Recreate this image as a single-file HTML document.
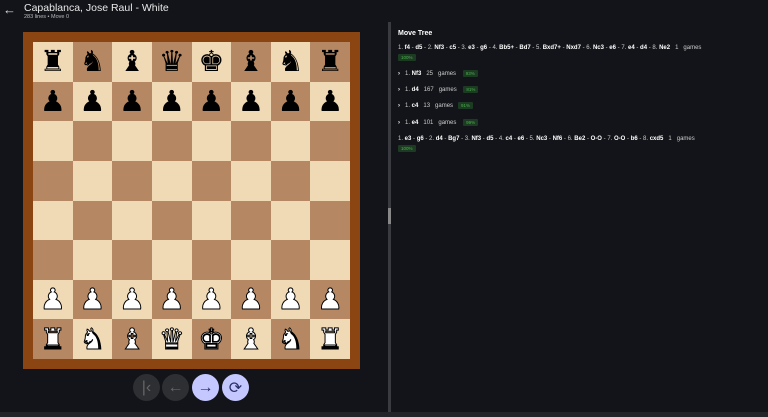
<!DOCTYPE html>
<html><head><meta charset="utf-8"><style>
*{margin:0;padding:0;box-sizing:border-box}
body{width:768px;height:417px;background:#131419;font-family:"Liberation Sans",sans-serif;color:#e6e6e6;position:relative;overflow:hidden}
.back{position:absolute;left:3px;top:2px;font-size:13px;color:#ddd}
.title{position:absolute;left:24px;top:2px;font-size:10.5px;color:#e8e8e8}
.sub{position:absolute;left:24px;top:14px;font-size:5.5px;color:#bbb}
.board{position:absolute;left:23px;top:32px;width:337px;height:337px;background:#8b4513;padding:10px}
.grid{display:grid;grid-template-columns:repeat(8,39.625px);grid-template-rows:repeat(8,39.625px)}
.sq{display:flex;align-items:center;justify-content:center;font-family:"DejaVu Sans",sans-serif;font-size:29px;line-height:1}
.l{background:#f0d9b5}.d{background:#b58863}
.b{color:#000}.w{color:#fff;-webkit-text-stroke:1px #000}
.btn{position:absolute;top:374px;width:27px;height:27px;border-radius:50%;display:flex;align-items:center;justify-content:center;font-size:16px}
.div{position:absolute;left:388px;top:22px;width:3px;height:390px;background:#3a3b40}
.handle{position:absolute;left:388px;top:208px;width:3px;height:16px;background:#888}
.foot{position:absolute;left:0;top:412px;width:768px;height:5px;background:#22242a}
.rp{position:absolute;left:398px;top:30px;font-size:6px;color:#ddd}
.mt{font-size:7px;font-weight:bold;color:#fff;margin-bottom:8px}
.pct{display:inline-block;background:#1d3a22;color:#4caf50;font-size:4.5px;padding:1px 3px;border-radius:1px}
.row{position:absolute;left:398px;font-size:6px;color:#ccc;white-space:nowrap}
.row b{color:#fff}
</style></head><body>
<div class="back">←</div>
<div class="title">Capablanca, Jose Raul - White</div>
<div class="sub">283 lines • Move 0</div>
<div class="board"><div class="grid">
<div class="sq l b">♜</div><div class="sq d b">♞</div><div class="sq l b">♝</div><div class="sq d b">♛</div><div class="sq l b">♚</div><div class="sq d b">♝</div><div class="sq l b">♞</div><div class="sq d b">♜</div>
<div class="sq d b">♟</div><div class="sq l b">♟</div><div class="sq d b">♟</div><div class="sq l b">♟</div><div class="sq d b">♟</div><div class="sq l b">♟</div><div class="sq d b">♟</div><div class="sq l b">♟</div>
<div class="sq l"></div><div class="sq d"></div><div class="sq l"></div><div class="sq d"></div><div class="sq l"></div><div class="sq d"></div><div class="sq l"></div><div class="sq d"></div>
<div class="sq d"></div><div class="sq l"></div><div class="sq d"></div><div class="sq l"></div><div class="sq d"></div><div class="sq l"></div><div class="sq d"></div><div class="sq l"></div>
<div class="sq l"></div><div class="sq d"></div><div class="sq l"></div><div class="sq d"></div><div class="sq l"></div><div class="sq d"></div><div class="sq l"></div><div class="sq d"></div>
<div class="sq d"></div><div class="sq l"></div><div class="sq d"></div><div class="sq l"></div><div class="sq d"></div><div class="sq l"></div><div class="sq d"></div><div class="sq l"></div>
<div class="sq l w">♟</div><div class="sq d w">♟</div><div class="sq l w">♟</div><div class="sq d w">♟</div><div class="sq l w">♟</div><div class="sq d w">♟</div><div class="sq l w">♟</div><div class="sq d w">♟</div>
<div class="sq d w">♜</div><div class="sq l w">♞</div><div class="sq d w">♝</div><div class="sq l w">♛</div><div class="sq d w">♚</div><div class="sq l w">♝</div><div class="sq d w">♞</div><div class="sq l w">♜</div>
</div></div>
<div class="btn" style="left:133px;background:#2e2f33;color:#666">|‹</div>
<div class="btn" style="left:162px;background:#2e2f33;color:#666">←</div>
<div class="btn" style="left:192px;background:#c4c8ff;color:#2a2f6a">→</div>
<div class="btn" style="left:222px;background:#c4c8ff;color:#2a2f6a">⟳</div>
<div class="div"></div><div class="handle"></div>
<div class="foot"></div>
<div class="rp"><div class="mt">Move Tree</div></div>
<div class="row" style="top:45px">1. <b>f4</b> - <b>d5</b> - 2. <b>Nf3</b> - <b>c5</b> - 3. <b>e3</b> - <b>g6</b> - 4. <b>Bb5+</b> - <b>Bd7</b> - 5. <b>Bxd7+</b> - <b>Nxd7</b> - 6. <b>Nc3</b> - <b>e6</b> - 7. <b>e4</b> - <b>d4</b> - 8. <b>Ne2</b> &nbsp; 1 &nbsp; games</div>
<div class="row" style="top:54px"><span class="pct">100%</span></div>
<div class="row" style="top:70px"><b>›</b> &nbsp; 1. <b>Nf3</b> &nbsp; 25 &nbsp; games &nbsp;&nbsp; <span class="pct">93%</span></div>
<div class="row" style="top:86px"><b>›</b> &nbsp; 1. <b>d4</b> &nbsp; 167 &nbsp; games &nbsp;&nbsp; <span class="pct">81%</span></div>
<div class="row" style="top:102px"><b>›</b> &nbsp; 1. <b>c4</b> &nbsp; 13 &nbsp; games &nbsp; <span class="pct">91%</span></div>
<div class="row" style="top:119px"><b>›</b> &nbsp; 1. <b>e4</b> &nbsp; 101 &nbsp; games &nbsp;&nbsp; <span class="pct">99%</span></div>
<div class="row" style="top:136px">1. <b>e3</b> - <b>g6</b> - 2. <b>d4</b> - <b>Bg7</b> - 3. <b>Nf3</b> - <b>d5</b> - 4. <b>c4</b> - <b>e6</b> - 5. <b>Nc3</b> - <b>Nf6</b> - 6. <b>Be2</b> - <b>O-O</b> - 7. <b>O-O</b> - <b>b6</b> - 8. <b>cxd5</b> &nbsp; 1 &nbsp; games</div>
<div class="row" style="top:145px"><span class="pct">100%</span></div>
</body></html>
